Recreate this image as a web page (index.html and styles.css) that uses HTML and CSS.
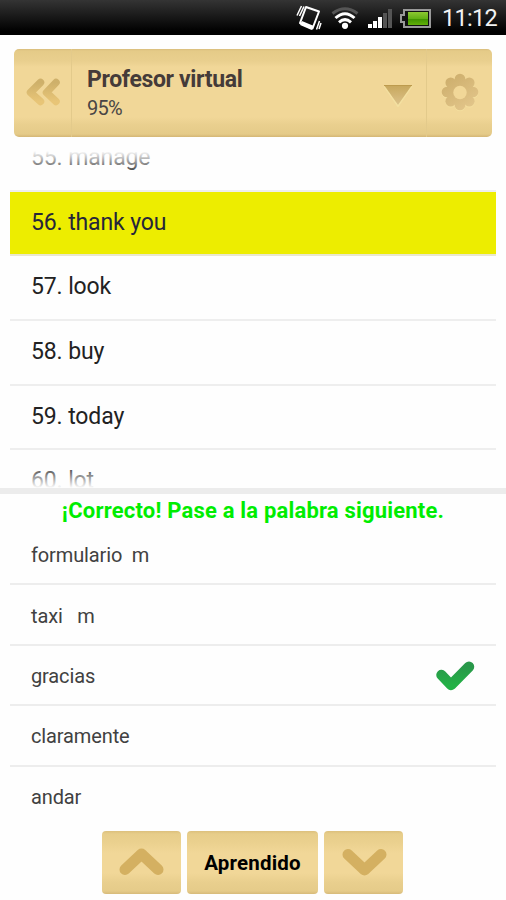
FILE: index.html
```html
<!DOCTYPE html>
<html lang="es">
<head>
<meta charset="utf-8">
<title>Profesor virtual</title>
<link rel="stylesheet" href="styles.css">
</head>
<body>
<div class="status">
  <svg class="status-icons" width="138" height="35" viewBox="294 0 138 35">
    <defs>
      <linearGradient id="bat" x1="0" y1="0" x2="0" y2="1"><stop offset="0" stop-color="#8cc832"/><stop offset=".55" stop-color="#5fae12"/><stop offset=".56" stop-color="#419400"/><stop offset="1" stop-color="#62b008"/></linearGradient>
    </defs>
    <g fill="none" stroke="#fff">
      <path d="M306 7L319 11.500L312.500 28.500L300 23Z" stroke-width="2" stroke-linejoin="round"/>
      <path d="M301 23L312.500 27.800" stroke-width="4.500"/>
      <path d="M301.500 6L297 15.500M304 6.500L299.500 16M316.500 29.500L319.500 21M319 29L321 23" stroke-width="1.500"/>
    </g>
    <g fill="none" stroke-width="3">
      <path d="M332.500 13.500Q345 4 357.500 13.500" stroke="#555"/>
      <path d="M335.500 18Q345 9.500 354.500 18M339 22.300Q345 17 351 22.300" stroke="#fff"/>
    </g>
    <circle cx="345" cy="25.800" r="3.100" fill="#fff"/>
    <path d="M368 24h4v4h-4zM373 21h4v7h-4zM378 17h4v11h-4z" fill="#fff"/>
    <path d="M383 13h4v15h-4zM388 9h4v19h-4z" fill="#555"/>
    <path d="M404 10H430V27H404V22H401V15H404Z" fill="#111" stroke="#999" stroke-width="2"/>
    <path d="M408 12h20v13h-20z" fill="url(#bat)"/>
  </svg>
  <span class="clock">11:12</span>
</div>
<header class="bar">
  <div class="back">
    <svg width="58" height="88" viewBox="14 49 58 88">
      <defs><linearGradient id="gold" x1="0" y1="0" x2="0" y2="1"><stop offset="0" stop-color="#ceb06a"/><stop offset="1" stop-color="#e8c577"/></linearGradient></defs>
      <path d="M40.500 82.500L30.500 92.500L40.500 101.500M56 82.500L46.500 92.500L56 101.500" fill="none" stroke="url(#gold)" stroke-width="7.500" stroke-linecap="round" stroke-linejoin="round"/>
    </svg>
  </div>
  <div class="heading">
    <h1 class="title">Profesor virtual</h1>
    <div class="percent">95%</div>
  </div>
  <svg class="drop" width="56" height="88" viewBox="370 49 56 88">
    <defs><linearGradient id="tri" x1="0" y1="0" x2="0" y2="1"><stop offset="0" stop-color="#c7a75c"/><stop offset="1" stop-color="#dcc28a"/></linearGradient></defs>
    <path d="M384 86.500L398 107L412 86.500" fill="#f6e4a4" stroke="#f3dfa0"/>
    <path d="M384 85H412L398 105Z" fill="url(#tri)"/>
    <path d="M384 85.500H412" stroke="#bd9b4e"/>
  </svg>
  <div class="settings">
    <svg width="66" height="88" viewBox="426 49 66 88">
      <defs>
        <linearGradient id="gear" gradientUnits="userSpaceOnUse" x1="448" y1="76" x2="470" y2="110"><stop offset="0" stop-color="#cdae6c"/><stop offset="1" stop-color="#e3c68b"/></linearGradient>
        <g id="petals"><circle cx="460" cy="92" r="13.500"/><circle cx="460" cy="79" r="5.300"/><circle cx="469.300" cy="82.700" r="5.300"/><circle cx="473" cy="92" r="5.300"/><circle cx="469.300" cy="101.300" r="5.300"/><circle cx="460" cy="105" r="5.300"/><circle cx="450.700" cy="101.300" r="5.300"/><circle cx="447" cy="92" r="5.300"/><circle cx="450.700" cy="82.700" r="5.300"/></g>
      </defs>
      <use href="#petals" y="1" fill="#f4df9f"/>
      <use href="#petals" fill="url(#gear)"/>
      <circle cx="460" cy="92.500" r="6.700" fill="#f1d798"/>
    </svg>
  </div>
</header>
<main>
  <div class="words-view">
    <ul class="words">
      <li>55. manage</li>
      <li class="current">56. thank you</li>
      <li>57. look</li>
      <li>58. buy</li>
      <li>59. today</li>
      <li class="last">60. lot</li>
    </ul>
  </div>
  <p class="message"><span>¡Correcto! Pase a la palabra siguiente.</span></p>
  <ul class="answers">
    <li>formulario&nbsp; m</li>
    <li>taxi &nbsp; m</li>
    <li>gracias
      <svg width="42" height="34" viewBox="434 658 42 34">
        <defs><linearGradient id="ok" x1="0" y1="0" x2="0" y2="1"><stop offset="0" stop-color="#29984a"/><stop offset="1" stop-color="#23b146"/></linearGradient></defs>
        <path d="M441.500 674L451 684L469 665.700" fill="none" stroke="url(#ok)" stroke-width="10.500" stroke-linecap="round" stroke-linejoin="round"/>
      </svg>
    </li>
    <li>claramente</li>
    <li>andar</li>
  </ul>
</main>
<footer class="controls">
  <button class="btn arrow" aria-label="Anterior"><svg width="48" height="32" viewBox="0 0 48 32"><path d="M7 23.500L23.500 8L40 23.500" fill="none" stroke="#d4b061" stroke-width="11" stroke-linecap="round" stroke-linejoin="round"/></svg></button>
  <button class="btn learned"><span>Aprendido</span></button>
  <button class="btn arrow" aria-label="Siguiente"><svg width="48" height="32" viewBox="0 0 48 32"><path d="M8 8.500L24.500 24L41 8.500" fill="none" stroke="#d4b061" stroke-width="11" stroke-linecap="round" stroke-linejoin="round"/></svg></button>
</footer>
</body>
</html>
```
FILE: styles.css
```css
* { box-sizing: border-box; margin: 0; padding: 0; }
body { width: 506px; height: 900px; overflow: hidden; background: #fefefe; font-family: Roboto, sans-serif; color: #222; }
svg { display: block; flex: none; }
ul { list-style: none; }
.status { height: 35px; display: flex; justify-content: flex-end; background: linear-gradient(#343434, #000 90%); }
.clock { width: 74px; padding-left: 10px; font-size: 23.5px; letter-spacing: -0.7px; line-height: 36px; color: #f2f2f2; white-space: nowrap; }
.bar { height: 88px; margin: 14px 14px 0; display: flex; border-radius: 5px; overflow: hidden; background: linear-gradient(#d9bd7c 0, #e5cb88 2px, #e9cf8e 12px, #f1d798 18px, #f1d798 68px, #e9cf8e 76px, #e5cb89 85px, #d4b675 88px); }
.back { width: 58px; border-right: 1px solid #e3ca8b; }
.heading { flex: 1; padding: 17px 0 0 15px; }
.title { font-size: 23px; letter-spacing: -0.35px; line-height: 28px; font-weight: 700; color: #453b39; white-space: nowrap; }
.percent { font-size: 20px; letter-spacing: -0.7px; line-height: 28px; color: #494545; }
.settings { width: 66px; border-left: 1px solid #e3ca8b; }
.settings svg { margin-left: -1px; }
.words-view { position: relative; height: 351px; overflow: hidden; padding: 0 10px; }
.words-view::before, .words-view::after { content: ""; position: absolute; left: 0; right: 0; z-index: 1; }
.words-view::before { top: 0; height: 38px; background: linear-gradient(#fefefe 14px, rgba(254,254,254,0)); }
.words-view::after { bottom: 0; height: 24px; background: linear-gradient(rgba(254,254,254,0), #fefefe); }
.words { margin-top: -10px; }
.words li { height: 64.7px; padding-left: 21px; border-bottom: 2px solid #eeeeee; font-size: 23px; letter-spacing: -0.12px; line-height: 61.5px; white-space: nowrap; }
.words .last { height: 34px; border: 0; }
.words .current { background: #eded00; border-bottom-color: #e9e7ce; color: #26263a; }
.message { height: 37px; border-top: 6px solid #ececec; text-align: center; font-size: 22px; letter-spacing: 0.19px; line-height: 33px; font-weight: 700; color: #00ed00; white-space: nowrap; }
.answers { padding: 0 10px; }
.answers li { height: 60.4px; display: flex; align-items: center; justify-content: space-between; padding: 2px 20px 0 21px; border-bottom: 2px solid #ededed; font-size: 20px; letter-spacing: -0.13px; color: #414141; }
.answers li:last-child { border: 0; padding-top: 0; }
.controls { display: flex; justify-content: center; gap: 6px; margin: 4px 1px 0 0; }
.btn { height: 63px; border: 0; border-radius: 4px; display: flex; align-items: center; justify-content: center; font: 700 20.5px Roboto, sans-serif; letter-spacing: 0.2px; color: #000; background: linear-gradient(#dcc07d 0, #e7cd8a 3px, #ebd18f 12px, #f1d798 22px, #f1d798 42px, #e9cf8e 51px, #e5cb89 60px, #d7ba7a 63px); }
.btn span { padding-top: 2px; }
.arrow { width: 79px; }
.learned { width: 131px; }
```
